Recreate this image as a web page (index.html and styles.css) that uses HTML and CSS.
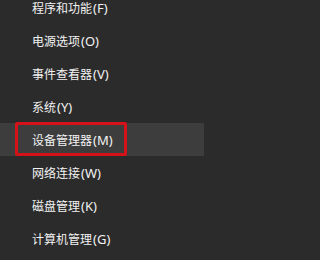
FILE: index.html
```html
<!DOCTYPE html>
<html lang="zh-CN">
<head>
<meta charset="utf-8">
<link rel="stylesheet" href="styles.css">
</head>
<body>
<ul class="menu">
  <li class="item">程序和功能<span class="key">(F)</span></li>
  <li class="item">电源选项<span class="key">(O)</span></li>
  <li class="item">事件查看器<span class="key">(V)</span></li>
  <li class="item">系统<span class="key">(Y)</span></li>
  <li class="item active"><span class="mark"></span>设备管理器<span class="key">(M)</span></li>
  <li class="item">网络连接<span class="key">(W)</span></li>
  <li class="item">磁盘管理<span class="key">(K)</span></li>
  <li class="item">计算机管理<span class="key">(G)</span></li>
</ul>
</body>
</html>
```
FILE: styles.css
```css
html, body {
  margin: 0;
  padding: 0;
  background: #2b2b2b;
  width: 204px;
  height: 260px;
  overflow: hidden;
}
.menu {
  list-style: none;
  margin: -9px 0 0 0;
  padding: 0;
  font-family: "Noto Sans CJK SC", "Microsoft YaHei", sans-serif;
  font-size: 12px;
  color: #f2f2f2;
}
.item {
  position: relative;
  height: 33px;
  line-height: 33px;
  padding-left: 32px;
  white-space: nowrap;
}
.key {
  font-family: "Noto Sans", "Open Sans", sans-serif;
  font-size: 13px;
  margin-left: 1px;
}
.active {
  background: #3d3d3d;
}
.mark {
  position: absolute;
  left: 15px;
  top: -1px;
  width: 106px;
  height: 28px;
  border: 3px solid #d4121a;
  border-radius: 2px;
}
```
